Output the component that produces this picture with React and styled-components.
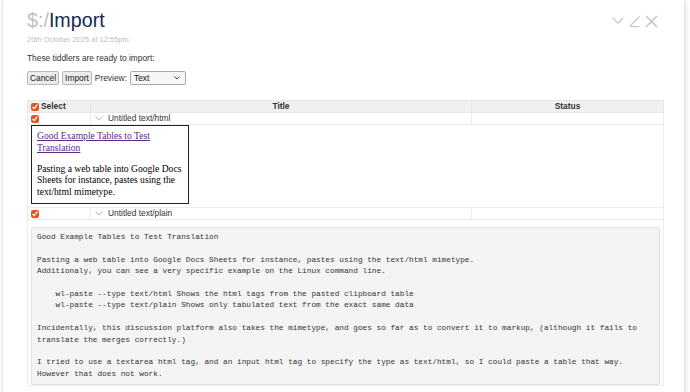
import React from "react";
import styled, { createGlobalStyle } from "styled-components";

const GlobalStyle = createGlobalStyle`
  html, body {
    margin: 0;
    padding: 0;
    background: #fff;
  }
  body {
    font-family: "Liberation Sans", Arial, sans-serif;
    color: #333;
  }
`;

const Page = styled.div`
  width: 690px;
  height: 392px;
  overflow: hidden;
  padding-left: 2px;
  box-sizing: border-box;
`;

const Card = styled.div`
  width: 683px;
  box-sizing: border-box;
  border: 1px solid #e4e4e4;
  border-top: 0;
  box-shadow: 1px 1px 4px rgba(0, 0, 0, 0.12);
  padding: 8px 21px 60px 24px;
  background: #fff;
`;

const TitleRow = styled.div`
  display: flex;
  align-items: center;
  justify-content: space-between;
`;

const Title = styled.h2`
  margin: 0;
  font-weight: normal;
  font-size: 19.7px;
  line-height: 24px;
  color: #182955;
`;

const Prefix = styled.span`
  color: #c0c0c0;
`;

const Controls = styled.div`
  display: flex;
  align-items: center;
  gap: 4px;
  margin-right: 5px;
  margin-top: 2px;
  color: #c4c4c4;
`;

const Subtitle = styled.div`
  margin-top: 3px;
  font-size: 7.5px;
  line-height: 9px;
  color: #c0c0c0;
`;

const Intro = styled.p`
  margin: 9px 0 0;
  font-size: 8.4px;
  line-height: 10px;
  color: #333;
`;

const Toolbar = styled.div`
  display: flex;
  align-items: center;
  gap: 3px;
  margin-top: 8px;
  font-size: 8.4px;
  color: #333;
`;

const Button = styled.button`
  font-family: "Liberation Sans", Arial, sans-serif;
  font-size: 8.4px;
  height: 14px;
  padding: 0 2px;
  border: 1px solid #b8b8b8;
  border-radius: 2px;
  background: #ececec;
  color: #222;
`;

const SelectBox = styled.div`
  display: flex;
  align-items: center;
  justify-content: space-between;
  box-sizing: border-box;
  width: 56px;
  height: 14px;
  padding: 0 5px 0 3px;
  border: 1px solid #a8a8a8;
  border-radius: 2px;
  background: #f6f6f6;
  color: #111;
`;

const Table = styled.table`
  margin-top: 15px;
  width: 636px;
  border-collapse: collapse;
  table-layout: fixed;
  font-size: 8.4px;
  line-height: 11px;
  color: #333;
`;

const Th = styled.th`
  background: #f0f0f0;
  border: 1px solid #e6e6e6;
  padding: 0 3px;
  font-weight: bold;
  text-align: ${(p) => p.$align || "center"};
  color: #333;
`;

const Td = styled.td`
  border: 1px solid #ececec;
  padding: ${(p) => p.$pad || "0 3px"};
  vertical-align: middle;
`;

const CheckCell = styled.span`
  display: flex;
  align-items: center;
  gap: 2px;
`;

const Check = styled.input.attrs({ type: "checkbox", defaultChecked: true })`
  width: 8px;
  height: 8px;
  margin: 0;
  accent-color: #e8541e;
`;

const Fold = styled.span`
  display: flex;
  align-items: center;
  gap: 5px;
  padding-left: 1px;
  color: #333;
`;

const PreviewFrame = styled.div`
  box-sizing: border-box;
  width: 158px;
  height: 79px;
  border: 1.5px solid #222;
  padding: 4px 5px;
  font-family: "Liberation Serif", "Times New Roman", serif;
  font-size: 9.6px;
  line-height: 11.5px;
  color: #000;
  margin-bottom: 3px;
`;

const Para = styled.p`
  margin: 0 0 9.6px;
`;

const Link = styled.a`
  color: #5a2a8c;
  text-decoration: underline;
`;

const Pre = styled.pre`
  margin: 7px 0 0;
  box-sizing: border-box;
  width: 629px;
  padding: 4px 5px 4px;
  border: 1px solid #e0e0e0;
  border-radius: 2px;
  background: #f4f4f4;
  font-family: "Liberation Mono", "Courier New", monospace;
  font-size: 7.75px;
  line-height: 11.4px;
  color: #333;
  white-space: pre;
  overflow: hidden;
`;

const plainText = `Good Example Tables to Test Translation

Pasting a web table into Google Docs Sheets for instance, pastes using the text/html mimetype.
Additionaly, you can see a very specific example on the Linux command line.

    wl-paste --type text/html Shows the html tags from the pasted clipboard table
    wl-paste --type text/plain Shows only tabulated text from the exact same data

Incidentally, this discussion platform also takes the mimetype, and goes so far as to convert it to markup, (although it fails to
translate the merges correctly.)

I tried to use a textarea html tag, and an input html tag to specify the type as text/html, so I could paste a table that way.
However that does not work.`;

function Chevron({ size = 12, stroke = 1.3 }) {
  return (
    <svg width={size} height={size * 0.6} viewBox="0 0 12 7" fill="none">
      <polyline points="0.8,0.8 6,6 11.2,0.8" stroke="currentColor" strokeWidth={stroke} />
    </svg>
  );
}

function EditIcon() {
  return (
    <svg width="13" height="13" viewBox="0 0 13 13" fill="none">
      <path d="M11.5 1.5 L2.5 10.5" stroke="currentColor" strokeWidth="1.3" />
      <path d="M2 11.5 C4 10.8 6 11.8 11.5 11.5" stroke="currentColor" strokeWidth="1.2" />
    </svg>
  );
}

function CloseIcon() {
  return (
    <svg width="13" height="13" viewBox="0 0 13 13" fill="none">
      <path d="M1 1 L12 12 M12 1 L1 12" stroke="currentColor" strokeWidth="1.5" />
    </svg>
  );
}

function RowChevron() {
  return (
    <svg width="8" height="5" viewBox="0 0 8 5" fill="none">
      <polyline points="0.5,0.5 4,4 7.5,0.5" stroke="#b0b0b0" strokeWidth="0.9" />
    </svg>
  );
}

export default function App() {
  return (
    <Page>
      <GlobalStyle />
      <Card>
        <TitleRow>
          <Title>
            <Prefix>$:/</Prefix>Import
          </Title>
          <Controls>
            <Chevron />
            <EditIcon />
            <CloseIcon />
          </Controls>
        </TitleRow>
        <Subtitle>20th October 2025 at 12:55pm</Subtitle>
        <Intro>These tiddlers are ready to import:</Intro>
        <Toolbar>
          <Button>Cancel</Button>
          <Button>Import</Button>
          <span>Preview:</span>
          <SelectBox>
            <span>Text</span>
            <Chevron size={6} stroke={1.6} />
          </SelectBox>
        </Toolbar>
        <Table>
          <colgroup>
            <col style={{ width: 63 }} />
            <col style={{ width: 381 }} />
            <col style={{ width: 192 }} />
          </colgroup>
          <thead>
            <tr>
              <Th $align="left">
                <CheckCell>
                  <Check />
                  Select
                </CheckCell>
              </Th>
              <Th>Title</Th>
              <Th>Status</Th>
            </tr>
          </thead>
          <tbody>
            <tr>
              <Td>
                <CheckCell>
                  <Check />
                </CheckCell>
              </Td>
              <Td>
                <Fold>
                  <RowChevron />
                  Untitled text/html
                </Fold>
              </Td>
              <Td />
            </tr>
            <tr>
              <Td colSpan={3} $pad="0 3px">
                <PreviewFrame>
                  <Para>
                    <Link href="#">
                      Good Example Tables to Test
                      <br />
                      Translation
                    </Link>
                  </Para>
                  <Para>
                    Pasting a web table into Google Docs
                    <br />
                    Sheets for instance, pastes using the
                    <br />
                    text/html mimetype.
                  </Para>
                </PreviewFrame>
              </Td>
            </tr>
            <tr>
              <Td>
                <CheckCell>
                  <Check />
                </CheckCell>
              </Td>
              <Td>
                <Fold>
                  <RowChevron />
                  Untitled text/plain
                </Fold>
              </Td>
              <Td />
            </tr>
            <tr>
              <Td colSpan={3} $pad="0 3px">
                <Pre>{plainText}</Pre>
              </Td>
            </tr>
          </tbody>
        </Table>
      </Card>
    </Page>
  );
}
